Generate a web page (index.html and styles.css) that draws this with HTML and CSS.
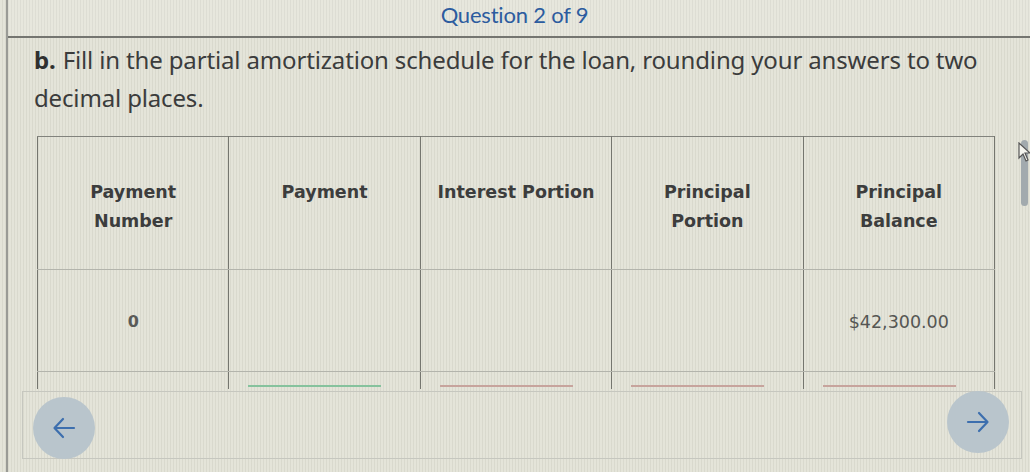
FILE: index.html
```html
<!DOCTYPE html>
<html>
<head>
<meta charset="utf-8">
<link rel="stylesheet" href="styles.css">
</head>
<body>
<div class="page">
  <header class="topbar"><span class="qtitle">Question 2 of 9</span></header>
  <p class="prompt"><b>b.</b> Fill in the partial amortization schedule for the loan, rounding your answers to two decimal places.</p>
  <div class="table-clip">
    <table class="sched">
      <tr class="head">
        <th>Payment<br>Number</th>
        <th>Payment</th>
        <th>Interest Portion</th>
        <th>Principal<br>Portion</th>
        <th>Principal<br>Balance</th>
      </tr>
      <tr class="data">
        <td>0</td>
        <td></td>
        <td></td>
        <td></td>
        <td>$42,300.00</td>
      </tr>
      <tr class="next">
        <td></td>
        <td><span class="field ok"></span></td>
        <td><span class="field bad"></span></td>
        <td><span class="field bad"></span></td>
        <td><span class="field bad"></span></td>
      </tr>
    </table>
  </div>
  <div class="footer">
    <button class="nav prev" aria-label="Previous">
      <svg width="26" height="26" viewBox="0 0 26 26"><path d="M23 13H4M12 4L3.5 13L12 22" fill="none" stroke="#3d6fae" stroke-width="2.2" stroke-linecap="round" stroke-linejoin="round"/></svg>
    </button>
    <button class="nav next-btn" aria-label="Next">
      <svg width="26" height="26" viewBox="0 0 26 26"><path d="M3 13H22M14 4L22.5 13L14 22" fill="none" stroke="#3d6fae" stroke-width="2.2" stroke-linecap="round" stroke-linejoin="round"/></svg>
    </button>
  </div>
</div>
<div class="scrollbar"></div>
<svg class="cursor" width="12" height="20" viewBox="0 0 12 20"><path d="M1 1V16L5 12L8 19L10 18L7 11H12Z" fill="#f4f4ee" stroke="#555" stroke-width="1.2"/></svg>
</body>
</html>
```
FILE: styles.css
```css
html, body {
  margin: 0;
  padding: 0;
}
body {
  width: 1030px;
  height: 472px;
  overflow: hidden;
  position: relative;
  background-color: #e1e1d5;
  background-image: repeating-linear-gradient(90deg, rgba(255,255,255,0.10) 0 2px, rgba(0,0,0,0.035) 2px 3px);
  font-family: "Noto Sans", "DejaVu Sans", sans-serif;
}
.page {
  margin-left: 6px;
  height: 472px;
  border-left: 2px solid #9a9b96;
}
.topbar {
  height: 36px;
  border-bottom: 2px solid #747570;
  display: flex;
  justify-content: center;
  align-items: flex-start;
  background: rgba(255,255,255,0.12);
}
.qtitle {
  font-family: "Lato", "Noto Sans", sans-serif;
  font-size: 22px;
  line-height: 30px;
  color: #2c5c9f;
  letter-spacing: -0.2px;
  padding-right: 9px;
}
.prompt {
  margin: 3px 34px 0 26px;
  font-size: 24px;
  line-height: 38px;
  color: #3b3c3c;
  letter-spacing: -0.15px;
}
.prompt b {
  color: #2f3030;
  margin-right: 1px;
}
.table-clip {
  margin: 19px 0 0 29px;
  width: 962px;
  height: 253px;
  overflow: hidden;
}
.sched {
  border-collapse: collapse;
  table-layout: fixed;
  width: 958px;
  font-family: "DejaVu Sans", Verdana, sans-serif;
  color: #3a3a3a;
}
.sched th, .sched td {
  width: 191px;
  border-left: 1.5px solid #75766f;
  border-right: 1.5px solid #75766f;
  border-top: 1px solid #b3b4ac;
  border-bottom: 1px solid #b3b4ac;
  text-align: center;
  padding: 0;
}
.sched tr.head th {
  border-top: 1.5px solid #82837d;
  height: 133px;
  vertical-align: top;
  padding-top: 41px;
  box-sizing: border-box;
  font-size: 17.5px;
  line-height: 29px;
  font-weight: bold;
  color: #3c3d3d;
}
.sched tr.data td {
  height: 102px;
  vertical-align: middle;
  font-size: 17.5px;
  color: #555653;
  padding-top: 2px;
  box-sizing: border-box;
}
.sched tr.data td:first-child {
  font-weight: bold;
  color: #5a5b58;
  font-size: 16px;
}
.sched tr.next td {
  height: 100px;
  vertical-align: top;
  padding-top: 13px;
  text-align: left;
}
.field {
  display: block;
  margin-left: 19px;
  width: 133px;
  height: 0;
  border-top: 2px solid #c7a49d;
}
.field.ok {
  border-top-color: #86c29d;
}
.footer {
  margin: 2px 0 0 14px;
  width: 1000px;
  height: 68px;
  border: 1px solid #c6c7bf;
  box-sizing: border-box;
  display: flex;
  justify-content: space-between;
  align-items: center;
  padding: 0 12px 0 10px;
}
.nav {
  width: 62px;
  height: 62px;
  border-radius: 50%;
  border: none;
  background: #b9c5cc;
  display: flex;
  align-items: center;
  justify-content: center;
  padding: 0;
}
.nav.prev {
  margin-top: 6px;
}
.nav.next-btn {
  margin-top: -6px;
}
.scrollbar {
  position: absolute;
  left: 1021px;
  top: 140px;
  width: 7px;
  height: 66px;
  border-radius: 4px;
  background: #a2aaae;
}
.cursor {
  position: absolute;
  left: 1018px;
  top: 142px;
}
```
